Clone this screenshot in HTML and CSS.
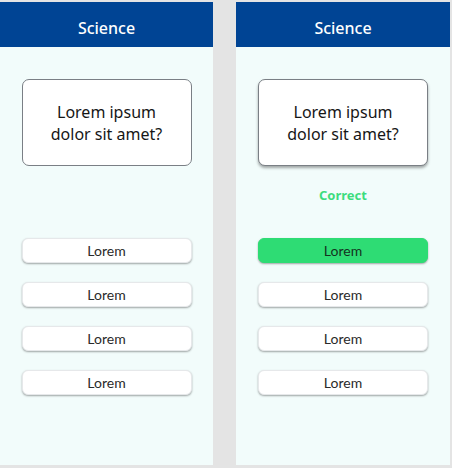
FILE: index.html
```html
<!DOCTYPE html>
<html>
<head>
<meta charset="utf-8">
<link rel="stylesheet" href="styles.css">
</head>
<body>
<div class="screens">
  <section class="panel">
    <header class="bar">Science</header>
    <div class="question">Lorem ipsum<br>dolor sit amet?</div>
    <div class="feedback"></div>
    <div class="answers">
      <div class="answer">Lorem</div>
      <div class="answer">Lorem</div>
      <div class="answer">Lorem</div>
      <div class="answer">Lorem</div>
    </div>
  </section>
  <section class="panel panel-right">
    <header class="bar">Science</header>
    <div class="question question-raised">Lorem ipsum<br>dolor sit amet?</div>
    <div class="feedback">Correct</div>
    <div class="answers">
      <div class="answer answer-correct">Lorem</div>
      <div class="answer">Lorem</div>
      <div class="answer">Lorem</div>
      <div class="answer">Lorem</div>
    </div>
  </section>
</div>
</body>
</html>
```

FILE: styles.css
```css
html, body {
  margin: 0;
  padding: 0;
}
body {
  background: #e4e4e4;
  width: 452px;
  height: 468px;
  overflow: hidden;
  font-family: "Noto Sans", "Open Sans", sans-serif;
}
.screens {
  display: flex;
  gap: 23px;
  padding-top: 2px;
}
.panel {
  width: 213px;
  height: 463px;
  background: #f2fcfb;
  display: flex;
  flex-direction: column;
  align-items: center;
}
.panel-right {
  width: 214px;
}
.bar {
  align-self: stretch;
  height: 45px;
  box-sizing: border-box;
  padding-top: 6px;
  background: #004494;
  color: #fff;
  font-size: 16px;
  font-weight: 500;
  display: flex;
  align-items: center;
  justify-content: center;
}
.question {
  margin-top: 32px;
  width: 168px;
  height: 85px;
  background: #fff;
  border: 1px solid #7a7f85;
  border-radius: 7px;
  display: flex;
  align-items: center;
  justify-content: center;
  text-align: center;
  font-size: 16px;
  line-height: 22px;
  color: #161616;
}
.question-raised {
  box-shadow: 0 2px 3px rgba(0, 0, 0, 0.35);
}
.feedback {
  margin-top: 19px;
  height: 20px;
  line-height: 20px;
  font-size: 13px;
  font-weight: 700;
  color: #3ddc7e;
}
.answers {
  margin-top: 33px;
  display: flex;
  flex-direction: column;
  gap: 19px;
}
.answer {
  width: 170px;
  height: 25px;
  box-sizing: border-box;
  background: #fff;
  border: 1px solid #e6e8ea;
  border-radius: 6px;
  box-shadow: 0 1px 2px rgba(0, 0, 0, 0.35);
  display: flex;
  align-items: center;
  justify-content: center;
  font-family: "Lato", sans-serif;
  font-size: 14px;
  color: #2a2a2a;
}
.answer-correct {
  background: #2edc74;
  border-color: #2edc74;
  color: #14331f;
}
```
